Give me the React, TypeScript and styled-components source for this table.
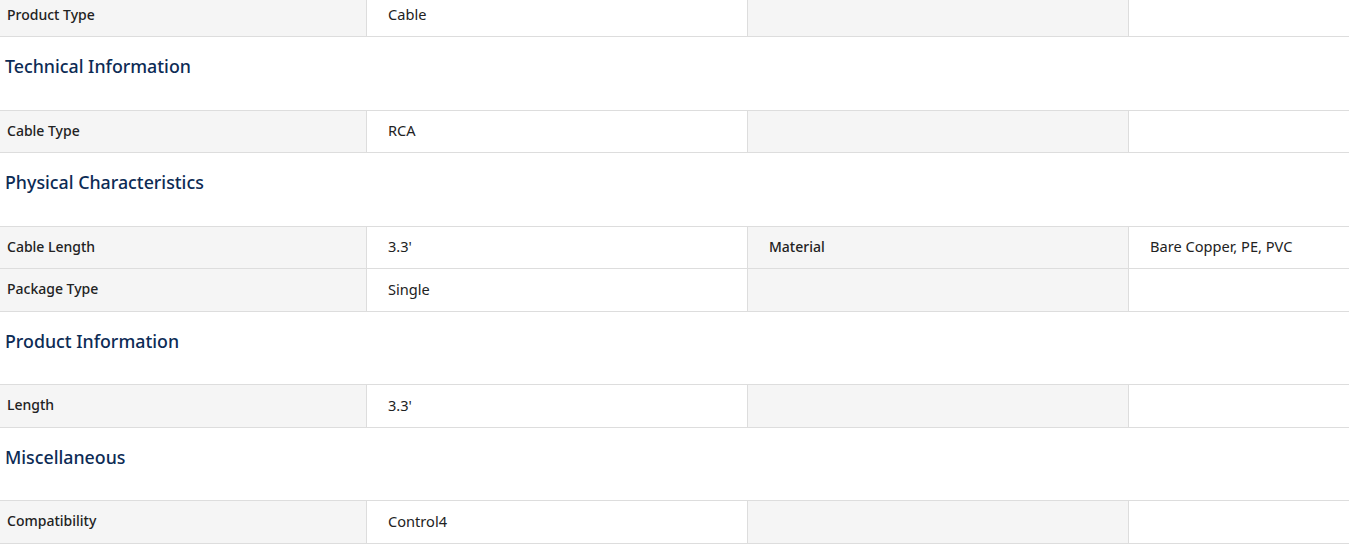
import React from "react";
import styled, { createGlobalStyle } from "styled-components";

type Spec = {
  label: string;
  value: string;
  label2?: string;
  value2?: string;
};

type Section = {
  title?: string;
  rows: Spec[];
};

const COLORS = {
  BORDER: "#dddddd",
  LABEL_BG: "#f5f5f5",
  TEXT: "#222222",
  HEADING: "#0c2b55",
};

const SECTIONS: Section[] = [
  { rows: [{ label: "Product Type", value: "Cable" }] },
  { title: "Technical Information", rows: [{ label: "Cable Type", value: "RCA" }] },
  {
    title: "Physical Characteristics",
    rows: [
      { label: "Cable Length", value: "3.3'", label2: "Material", value2: "Bare Copper, PE, PVC" },
      { label: "Package Type", value: "Single" },
    ],
  },
  { title: "Product Information", rows: [{ label: "Length", value: "3.3'" }] },
  { title: "Miscellaneous", rows: [{ label: "Compatibility", value: "Control4" }] },
];

const GlobalStyle = createGlobalStyle`
  html, body {
    margin: 0;
    padding: 0;
    background: #ffffff;
    overflow: hidden;
  }
  body {
    font-family: "Noto Sans", "Open Sans", sans-serif;
    color: ${COLORS.TEXT};
  }
`;

const Wrapper = styled.div`
  width: 1349px;
  margin-top: -5.5px;
  overflow: hidden;
`;

const Heading = styled.h3`
  margin: 0;
  height: 73.5px;
  padding: 19px 5px 0;
  box-sizing: border-box;
  border-bottom: 1px solid ${COLORS.BORDER};

  font-size: 17.8px;
  font-weight: 500;
  line-height: 20px;
  color: ${COLORS.HEADING};
`;

const Row = styled.div`
  display: grid;
  grid-template-columns: 366px 381px 381px 1fr;
  height: 42.5px;
  box-sizing: border-box;
  border-bottom: 1px solid ${COLORS.BORDER};
`;

const Cell = styled.div<{ $label?: boolean; $first?: boolean }>`
  display: flex;
  align-items: center;
  padding-left: ${(p) => (p.$first ? 7 : 21)}px;
  padding-bottom: 2px;
  background: ${(p) => (p.$label ? COLORS.LABEL_BG : "#ffffff")};
  border-left: ${(p) => (p.$first ? "none" : `1px solid ${COLORS.BORDER}`)};

  font-size: ${(p) => (p.$label ? 14 : 14.6)}px;
  font-weight: ${(p) => (p.$label ? 500 : 400)};
  white-space: nowrap;
`;

export const App = (): JSX.Element => {
  return (
    <>
      <GlobalStyle />
      <Wrapper>
        {SECTIONS.map((section, i) => (
          <div key={i}>
            {section.title && <Heading>{section.title}</Heading>}
            {section.rows.map((row) => (
              <Row key={row.label}>
                <Cell $label $first>
                  {row.label}
                </Cell>
                <Cell>{row.value}</Cell>
                <Cell $label>{row.label2}</Cell>
                <Cell>{row.value2}</Cell>
              </Row>
            ))}
          </div>
        ))}
      </Wrapper>
    </>
  );
};

export default App;
